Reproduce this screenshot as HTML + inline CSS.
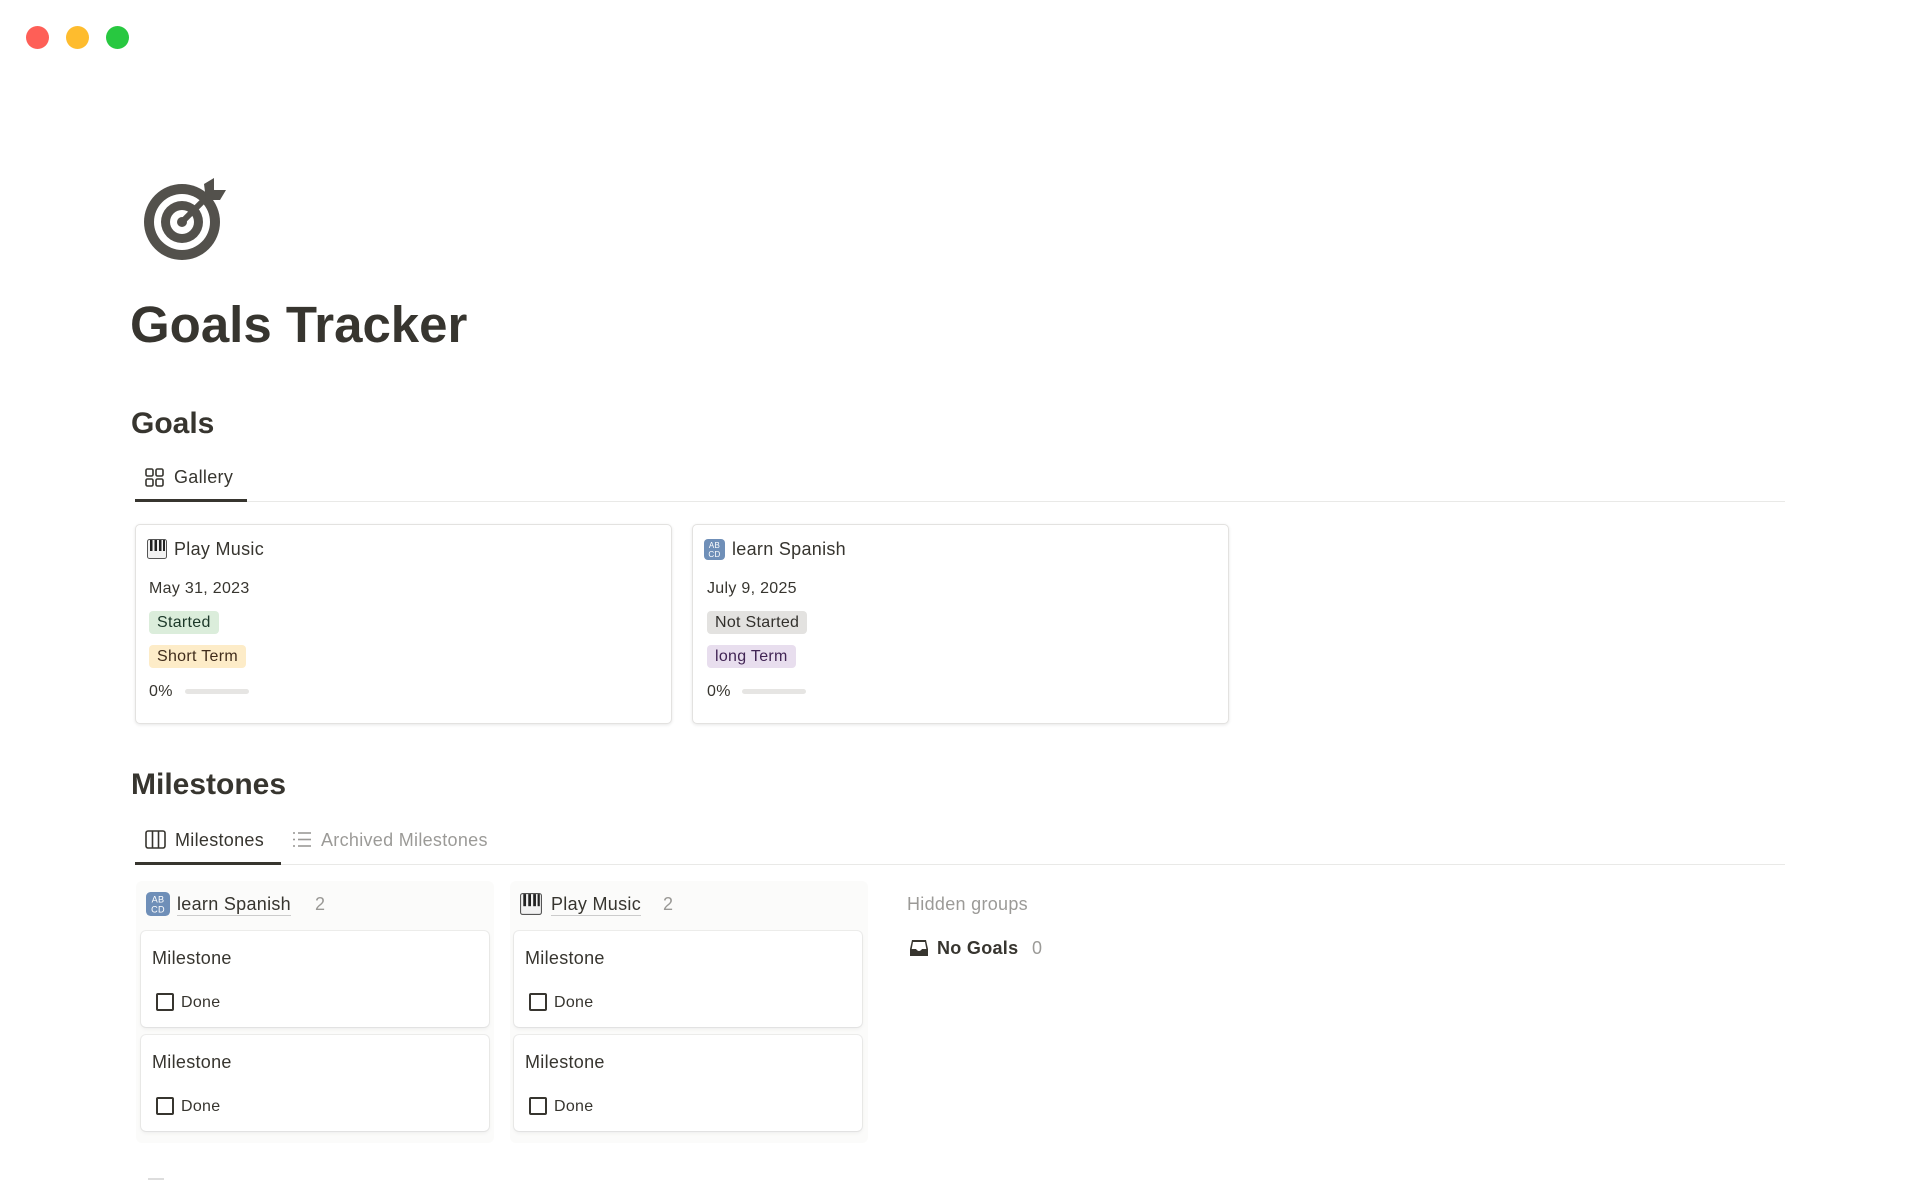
<!DOCTYPE html>
<html><head><meta charset="utf-8"><style>
*{margin:0;padding:0;box-sizing:border-box}
body{width:1920px;height:1200px;background:#fff;font-family:"Liberation Sans",sans-serif;color:#37352f;position:relative;overflow:hidden;letter-spacing:0.3px}
.a{position:absolute;white-space:nowrap}
.dot{position:absolute;width:23px;height:23px;border-radius:50%;top:26px}
.card{position:absolute;border:1px solid #e3e2e0;border-radius:5px;box-shadow:0 1px 3px rgba(15,15,15,.1);background:#fff}
.tag{position:absolute;height:23px;line-height:23px;padding:0 8px;border-radius:4px;font-size:16px}
.bar{position:absolute;height:5px;border-radius:3px;background:#e6e5e3}
.col{position:absolute;background:#fbfbfa;border-radius:6px}
.mc{position:absolute;background:#fff;border-radius:5px;box-shadow:0 0 0 1px rgba(15,15,15,.06),0 2px 4px rgba(15,15,15,.06)}
.cb{position:absolute;width:18px;height:18px;border:2px solid #37352f;border-radius:2px}
.g{color:rgba(55,53,47,.5)}
</style></head><body>
<div class="dot" style="left:26px;background:#fe5f57"></div>
<div class="dot" style="left:66px;background:#febc2e"></div>
<div class="dot" style="left:106px;background:#28c840"></div>

<svg class="a" style="left:142px;top:176px" width="88" height="88" viewBox="0 0 88 88">
<circle cx="40" cy="46" r="38" fill="#53514c"/>
<circle cx="40" cy="46" r="28" fill="#fff"/>
<circle cx="40" cy="46" r="21" fill="#53514c"/>
<circle cx="40" cy="46" r="12" fill="#fff"/>
<circle cx="40" cy="46" r="5" fill="#53514c"/>
<line x1="40" y1="46" x2="70" y2="16" stroke="#53514c" stroke-width="6" stroke-linecap="round"/>
<path d="M62 8 L72 2 L72 14 L84 14 L78 24 L64 24 Z" fill="#53514c"/>
</svg>

<div class="a" style="left:130px;top:295px;font-size:51px;font-weight:bold;line-height:60px;letter-spacing:0">Goals Tracker</div>
<div class="a" style="left:131px;top:406px;font-size:30px;font-weight:bold;line-height:36px;letter-spacing:0">Goals</div>

<svg class="a" style="left:145px;top:468px" width="20" height="19" viewBox="0 0 20 19" fill="none" stroke="#37352f" stroke-width="1.6"><rect x="1" y="1" width="7" height="7" rx="1.5"/><rect x="11" y="1" width="7" height="7" rx="1.5"/><rect x="1" y="11" width="7" height="7" rx="1.5"/><rect x="11" y="11" width="7" height="7" rx="1.5"/></svg>
<div class="a" style="left:174px;top:466px;font-size:18px;line-height:22px">Gallery</div>
<div class="a" style="left:135px;top:501px;width:1650px;height:1px;background:#e9e9e7"></div>
<div class="a" style="left:135px;top:499px;width:112px;height:3px;background:#37352f"></div>

<div class="card" style="left:135px;top:524px;width:537px;height:200px"></div>
<div class="card" style="left:692px;top:524px;width:537px;height:200px"></div>

<svg class="a" style="left:147px;top:539px" width="20" height="20" viewBox="0 0 20 20"><rect x="0.5" y="0.5" width="19" height="19" rx="2" fill="#f2f2f2" stroke="#555"/><rect x="3" y="1" width="2.5" height="11" fill="#222"/><rect x="7.5" y="1" width="2.5" height="11" fill="#222"/><rect x="12" y="1" width="2.5" height="11" fill="#222"/><rect x="16" y="1" width="2" height="11" fill="#222"/></svg>
<div class="a" style="left:174px;top:538px;font-size:18px;line-height:22px">Play Music</div>
<div class="a" style="left:149px;top:579px;font-size:16px;line-height:20px">May 31, 2023</div>
<div class="tag" style="left:149px;top:611px;background:#dbeddb;color:#1c3829">Started</div>
<div class="tag" style="left:149px;top:645px;background:#fdecc8;color:#402c1b">Short Term</div>
<div class="a" style="left:149px;top:682px;font-size:16px;line-height:20px">0%</div>
<div class="bar" style="left:185px;top:689px;width:64px"></div>

<svg class="a" style="left:704px;top:539px" width="21" height="21" viewBox="0 0 21 21"><rect x="0" y="0" width="21" height="21" rx="4" fill="#6f8fb8"/><text x="10.5" y="9" font-size="8" fill="#fff" text-anchor="middle" font-family="Liberation Sans">AB</text><text x="10.5" y="18" font-size="8" fill="#fff" text-anchor="middle" font-family="Liberation Sans">CD</text></svg>
<div class="a" style="left:732px;top:538px;font-size:18px;line-height:22px">learn Spanish</div>
<div class="a" style="left:707px;top:579px;font-size:16px;line-height:20px">July 9, 2025</div>
<div class="tag" style="left:707px;top:611px;background:#e3e2e0;color:#32302c">Not Started</div>
<div class="tag" style="left:707px;top:645px;background:#e8deee;color:#412454">long Term</div>
<div class="a" style="left:707px;top:682px;font-size:16px;line-height:20px">0%</div>
<div class="bar" style="left:742px;top:689px;width:64px"></div>

<div class="a" style="left:131px;top:767px;font-size:30px;font-weight:bold;line-height:36px;letter-spacing:0">Milestones</div>

<svg class="a" style="left:145px;top:830px" width="21" height="19" viewBox="0 0 21 19" fill="none" stroke="#37352f" stroke-width="1.6"><rect x="1" y="1" width="19" height="17" rx="2"/><line x1="7.5" y1="1" x2="7.5" y2="18"/><line x1="13.5" y1="1" x2="13.5" y2="18"/></svg>
<div class="a" style="left:175px;top:829px;font-size:18px;line-height:22px">Milestones</div>
<svg class="a" style="left:292px;top:831px" width="20" height="17" viewBox="0 0 20 17" stroke="#9b9a97" stroke-width="1.6"><line x1="1" y1="2" x2="3" y2="2"/><line x1="6" y1="2" x2="19" y2="2"/><line x1="1" y1="8.5" x2="3" y2="8.5"/><line x1="6" y1="8.5" x2="19" y2="8.5"/><line x1="1" y1="15" x2="3" y2="15"/><line x1="6" y1="15" x2="19" y2="15"/></svg>
<div class="a g" style="left:321px;top:829px;font-size:18px;line-height:22px">Archived Milestones</div>
<div class="a" style="left:135px;top:864px;width:1650px;height:1px;background:#e9e9e7"></div>
<div class="a" style="left:135px;top:862px;width:146px;height:3px;background:#37352f"></div>

<div class="col" style="left:136px;top:881px;width:358px;height:262px"></div>
<div class="col" style="left:510px;top:881px;width:358px;height:262px"></div>

<svg class="a" style="left:146px;top:892px" width="24" height="24" viewBox="0 0 21 21"><rect x="0" y="0" width="21" height="21" rx="4" fill="#6f8fb8"/><text x="10.5" y="9" font-size="8" fill="#fff" text-anchor="middle" font-family="Liberation Sans">AB</text><text x="10.5" y="18" font-size="8" fill="#fff" text-anchor="middle" font-family="Liberation Sans">CD</text></svg>
<div class="a" style="left:177px;top:893px;font-size:18px;line-height:22px;border-bottom:1px solid #ccc">learn Spanish</div>
<div class="a g" style="left:315px;top:893px;font-size:18px;line-height:22px">2</div>

<svg class="a" style="left:520px;top:893px" width="22" height="22" viewBox="0 0 20 20"><rect x="0.5" y="0.5" width="19" height="19" rx="2" fill="#f2f2f2" stroke="#555"/><rect x="3" y="1" width="2.5" height="11" fill="#222"/><rect x="7.5" y="1" width="2.5" height="11" fill="#222"/><rect x="12" y="1" width="2.5" height="11" fill="#222"/><rect x="16" y="1" width="2" height="11" fill="#222"/></svg>
<div class="a" style="left:551px;top:893px;font-size:18px;line-height:22px;border-bottom:1px solid #ccc">Play Music</div>
<div class="a g" style="left:663px;top:893px;font-size:18px;line-height:22px">2</div>

<div class="a g" style="left:907px;top:893px;font-size:18px;line-height:22px">Hidden groups</div>
<svg class="a" style="left:909px;top:938px" width="20" height="20" viewBox="0 0 20 20"><path d="M3 2 H17 L19 11 V18 H1 V11 Z" fill="#37352f"/><path d="M4 4 H16 L17.3 11 H13 Q10 15 7 11 H2.7 Z" fill="#fff"/></svg>
<div class="a" style="left:937px;top:937px;font-size:18px;line-height:22px;font-weight:bold">No Goals</div>
<div class="a g" style="left:1032px;top:937px;font-size:18px;line-height:22px">0</div>

<div class="mc" style="left:141px;top:931px;width:348px;height:96px"></div>
<div class="mc" style="left:141px;top:1035px;width:348px;height:96px"></div>
<div class="mc" style="left:514px;top:931px;width:348px;height:96px"></div>
<div class="mc" style="left:514px;top:1035px;width:348px;height:96px"></div>

<div class="a" style="left:152px;top:947px;font-size:18px;line-height:22px">Milestone</div>
<div class="cb" style="left:156px;top:993px"></div><div class="a" style="left:181px;top:993px;font-size:16px;line-height:20px">Done</div>
<div class="a" style="left:152px;top:1051px;font-size:18px;line-height:22px">Milestone</div>
<div class="cb" style="left:156px;top:1097px"></div><div class="a" style="left:181px;top:1097px;font-size:16px;line-height:20px">Done</div>
<div class="a" style="left:525px;top:947px;font-size:18px;line-height:22px">Milestone</div>
<div class="cb" style="left:529px;top:993px"></div><div class="a" style="left:554px;top:993px;font-size:16px;line-height:20px">Done</div>
<div class="a" style="left:525px;top:1051px;font-size:18px;line-height:22px">Milestone</div>
<div class="cb" style="left:529px;top:1097px"></div><div class="a" style="left:554px;top:1097px;font-size:16px;line-height:20px">Done</div>

<div class="a" style="left:148px;top:1178px;width:16px;height:2px;background:#ddd"></div>
</body></html>
